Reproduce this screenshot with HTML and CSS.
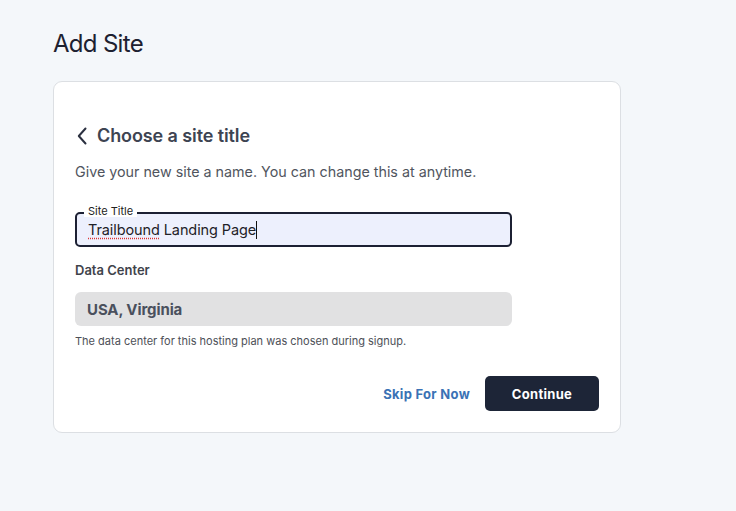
FILE: index.html
```html
<!DOCTYPE html>
<html>
<head>
<meta charset="utf-8">
<link rel="stylesheet" href="styles.css">
</head>
<body>
<main class="page">
  <h1 class="page-title">Add Site</h1>
  <section class="card">
    <div class="step-head">
      <svg class="back" width="12" height="18" viewBox="0 0 12 18"><path d="M9.5 1.5 L2.8 9 L9.5 16.5" fill="none" stroke="#2b3040" stroke-width="2" stroke-linecap="round" stroke-linejoin="round"/></svg>
      <h2 class="step-title">Choose a site title</h2>
    </div>
    <p class="desc">Give your new site a name. You can change this at anytime.</p>
    <div class="field">
      <span class="field-label">Site Title</span>
      <div class="field-input"><span class="spell">Trailbound</span> Landing Page<span class="caret"></span></div>
    </div>
    <div class="dc-label">Data Center</div>
    <div class="dc-box">USA, Virginia</div>
    <p class="help">The data center for this hosting plan was chosen during signup.</p>
    <div class="actions">
      <button class="skip">Skip For Now</button>
      <button class="continue">Continue</button>
    </div>
  </section>
</main>
</body>
</html>
```
FILE: styles.css
```css
* { box-sizing: border-box; }
html, body { margin: 0; padding: 0; }
body {
  background: #f4f7fa;
  font-family: Inter, "Noto Sans", sans-serif;
  width: 736px;
  height: 511px;
  overflow: hidden;
}
.page {
  padding: 27px 0 0 53px;
}
.page-title {
  margin: 0;
  font-size: 24px;
  font-weight: 400;
  line-height: 34px;
  color: #1d2130;
  letter-spacing: -0.7px;
}
.card {
  margin-top: 20px;
  width: 568px;
  height: 352px;
  background: #fff;
  border: 1px solid #dcdfe3;
  border-radius: 9px;
  padding: 42px 21px 0 21px;
}
.step-head {
  display: flex;
  align-items: center;
  gap: 9px;
  height: 24px;
}
.back { margin-left: 1px; }
.step-title {
  margin: 0;
  font-size: 18px;
  font-weight: 600;
  color: #3d4452;
  line-height: 24px;
  letter-spacing: -0.1px;
}
.desc {
  margin: 14px 0 0 0;
  font-size: 14.3px;
  line-height: 20px;
  color: #50555e;
  letter-spacing: 0;
}
.field {
  position: relative;
  margin-top: 30px;
  width: 437px;
}
.field-label {
  position: absolute;
  left: 9px;
  top: -7px;
  padding: 0 4px;
  background: #fff;
  font-size: 11px;
  line-height: 12px;
  color: #222;
}
.field-input {
  height: 35px;
  border: 2px solid #1c2033;
  border-radius: 5px;
  background: #edf0fd;
  padding: 7px 0 0 11px;
  font-size: 14.5px;
  line-height: 18px;
  color: #1f2228;
  letter-spacing: -0.1px;
}
.spell {
  text-decoration: underline dotted #d33;
  text-underline-offset: 3px;
}
.caret {
  display: inline-block;
  width: 1px;
  height: 18px;
  background: #111;
  vertical-align: -4px;
}
.dc-label {
  margin-top: 15px;
  font-size: 13px;
  font-weight: 600;
  line-height: 16px;
  color: #3f434b;
}
.dc-box {
  margin-top: 14px;
  width: 437px;
  height: 34px;
  background: #e1e1e2;
  border-radius: 6px;
  padding: 0 12px;
  display: flex;
  align-items: center;
  font-size: 15px;
  font-weight: 700;
  color: #4a505d;
  letter-spacing: -0.1px;
}
.help {
  margin: 8px 0 0 0;
  font-size: 11px;
  line-height: 14px;
  color: #4d5057;
}
.actions {
  margin-top: 28px;
  display: flex;
  justify-content: flex-end;
  align-items: center;
  gap: 15px;
}
.skip {
  border: none;
  background: none;
  padding: 0;
  font-family: inherit;
  font-size: 13px;
  font-weight: 700;
  color: #3a72b5;
  letter-spacing: 0.3px;
}
.continue {
  width: 114px;
  height: 35px;
  border: none;
  border-radius: 5px;
  background: #1d2537;
  color: #fff;
  font-family: inherit;
  font-size: 13px;
  font-weight: 700;
  letter-spacing: 0.3px;
}
```
